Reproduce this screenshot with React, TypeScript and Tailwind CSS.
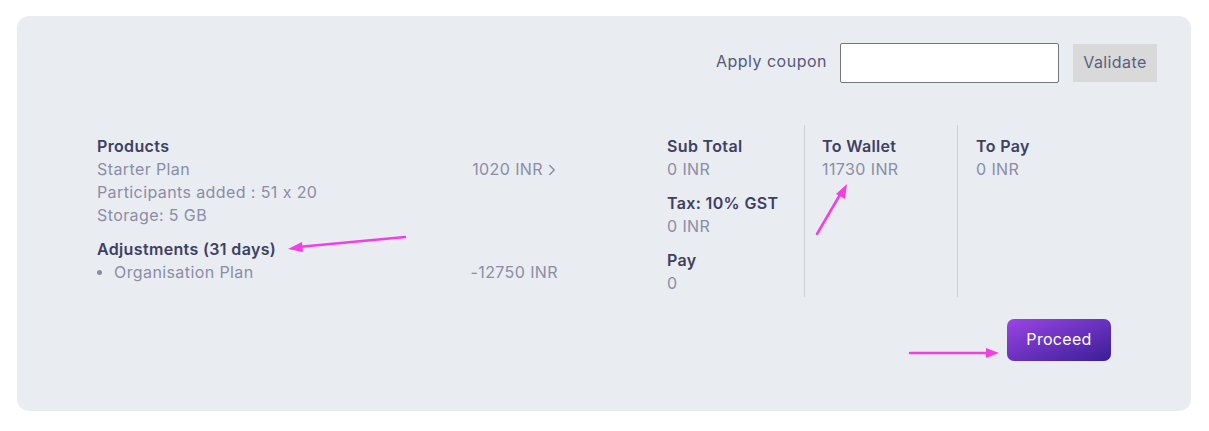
import { ChevronRight } from "lucide-react"

const head = "text-[16px] font-semibold leading-[23px] tracking-[0.35px] text-[#3e4062]"
const val = "text-[16px] leading-[23px] tracking-[0.4px] text-[#8b8da7]"

function Arrows() {
  return (
    <svg className="absolute inset-0 pointer-events-none" width="1209" height="431">
      <g stroke="#f23ee3" strokeWidth="2.5" fill="#f23ee3" strokeLinecap="round">
        <line x1="405" y1="237" x2="298" y2="247" />
        <polygon points="288,249 302,242 303,252" stroke="none" />
        <line x1="817" y1="234" x2="841" y2="193" />
        <polygon points="847,184 845,199 836,194" stroke="none" />
        <line x1="910" y1="353" x2="988" y2="353" />
        <polygon points="999,353 986,348 986,358" stroke="none" />
      </g>
    </svg>
  )
}

export default function App() {
  return (
    <div
      className="relative w-[1209px] h-[431px] bg-white pt-[16px] pl-[17px] [font-feature-settings:'calt'_0]"
      style={{ fontFamily: "Inter, 'Noto Sans', sans-serif" }}
    >
      <div className="w-[1174px] h-[395px] rounded-xl bg-[#e9ecf1] flex flex-col">
        {/* Coupon */}
        <div className="flex items-center justify-end pt-[27px] pr-[34px]">
          <span className="text-[16px] tracking-[0.5px] text-[#55587a] mr-[13px] -mt-[5px]">Apply coupon</span>
          <input
            className="w-[219px] h-[40px] bg-white border border-[#767676] rounded-[2px] outline-none"
            type="text"
          />
          <button className="ml-[14px] w-[84px] h-[38px] pb-[2px] bg-[#d9d9d9] text-[16px] tracking-[0.4px] text-[#5b5e82]">
            Validate
          </button>
        </div>

        {/* Summary */}
        <div className="flex mt-[42px] pl-[80px]">
          <div className="w-[461px] pt-[10px]">
            <div className={head}>Products</div>
            <div className="flex justify-between">
              <span className={val}>Starter Plan</span>
              <span className={`${val} flex items-center`}>
                1020 INR
                <ChevronRight className="w-[18px] h-[18px] -mr-[3px]" strokeWidth={2} />
              </span>
            </div>
            <div className={val}>Participants added : 51 x 20</div>
            <div className={val}>Storage: 5 GB</div>
            <div className={`${head} mt-[11px]`}>Adjustments (31 days)</div>
            <div className="flex justify-between">
              <span className={`${val} flex items-center`}>
                <span className="w-[5px] h-[5px] rounded-full bg-[#8b8da7] mr-[12px]" />
                Organisation Plan
              </span>
              <span className={val}>-12750 INR</span>
            </div>
          </div>

          <div className="ml-[109px] w-[138px] h-[172px] border-r border-[#cfd1d6] pt-[10px]">
            <div className={head}>Sub Total</div>
            <div className={val}>0 INR</div>
            <div className={`${head} mt-[11px]`}>Tax: 10% GST</div>
            <div className={val}>0 INR</div>
            <div className={`${head} mt-[11px]`}>Pay</div>
            <div className={val}>0</div>
          </div>

          <div className="w-[153px] h-[172px] border-r border-[#cfd1d6] pl-[17px] pt-[10px]">
            <div className={head}>To Wallet</div>
            <div className={val}>11730 INR</div>
          </div>

          <div className="pl-[18px] pt-[10px]">
            <div className={head}>To Pay</div>
            <div className={val}>0 INR</div>
          </div>
        </div>

        {/* Proceed */}
        <div className="flex justify-end pr-[80px] mt-[22px]">
          <button className="w-[104px] h-[42px] pb-[3px] rounded-[7px] bg-gradient-to-br from-[#9c44e6] to-[#3a1d97] text-white text-[16px] tracking-[0.3px]">
            Proceed
          </button>
        </div>
      </div>
      <Arrows />
    </div>
  )
}
